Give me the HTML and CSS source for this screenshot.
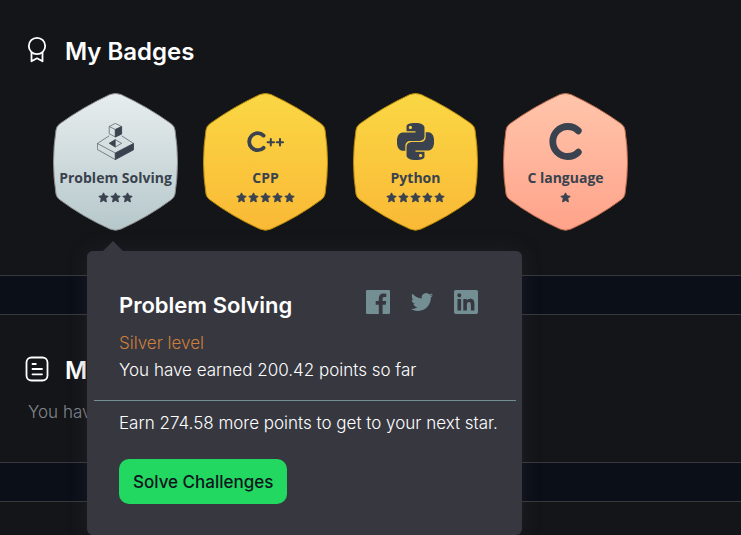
FILE: index.html
```html
<!DOCTYPE html>
<html lang="en">
<head>
<meta charset="utf-8">
<meta name="viewport" content="width=device-width, initial-scale=1">
<title>Profile</title>
<link rel="stylesheet" href="styles.css">
</head>
<body>
<svg class="defs" width="0" height="0" aria-hidden="true">
  <defs>
    <linearGradient id="silver" x1="0" y1="0" x2="0" y2="1"><stop offset="0" stop-color="#e7edee"/><stop offset="1" stop-color="#b6c8cb"/></linearGradient>
    <linearGradient id="gold" x1="0" y1="0" x2="0" y2="1"><stop offset="0" stop-color="#fad744"/><stop offset="1" stop-color="#fab936"/></linearGradient>
    <linearGradient id="bronze" x1="0" y1="0" x2="0" y2="1"><stop offset="0" stop-color="#ffc5ab"/><stop offset="1" stop-color="#ffa38a"/></linearGradient>
    <symbol id="hexagon" viewBox="0 0 127 138">
      <path d="M58 1.500Q63.500 -.5 69 1.500Q96 14 119.500 31Q122.500 33.500 123 37Q128 69 123 101Q122.500 104 119.500 106.500Q96 124 69 136Q63.500 138.500 58 136Q31 124 7.500 106.500Q4.500 104 4 101Q-1 69 4 37Q4.500 33.500 7.500 31Q31 14 58 1.500Z"/>
    </symbol>
    <symbol id="star" viewBox="0 0 10 10">
      <path d="M5 .8 6.300 3.500 9.200 3.900 7.100 6 7.600 9 5 7.600 2.400 9 2.900 6 .8 3.900 3.700 3.500Z" stroke="currentColor" stroke-width=".9" stroke-linejoin="round" fill="currentColor"/>
    </symbol>
  </defs>
</svg>
<main>
  <section class="panel panel-badges">
    <h2 class="panel-title">
      <svg class="title-icon" viewBox="0 0 24 28" fill="none" stroke="currentColor" stroke-width="1.800" stroke-linejoin="round" aria-hidden="true"><circle cx="12" cy="10" r="8.200"/><path d="M6.500 16.500V25.300L12 22.300 17.500 25.300V16.500"/></svg>
      My Badges
    </h2>
    <div class="badges">
      <button class="badge silver" type="button">
        <svg class="badge-shape" aria-hidden="true"><use href="#hexagon"/></svg>
        <span class="badge-body">
          <svg class="badge-icon" viewBox="0 0 37 37" fill="none" stroke="currentColor" stroke-width=".6" stroke-linejoin="round" aria-hidden="true">
            <path d="M18.300 .4 24.600 3.500V11L18.300 14 12.200 10.700V3.500ZM12.200 3.500 18.300 6.500 24.600 3.500M18.300 6.500V14"/>
            <path d="M18.300 6.500 24.600 3.500V11L18.300 14Z" fill="currentColor"/>
            <path d="M12.200 12.800 .4 20.500V26.500L18.300 36.600 36.600 26.700V20.500L24.600 12.800M.4 20.500 18.300 30 36.600 20.500M18.300 30V36.600"/>
            <path d="M18.300 30 36.600 20.500V26.700L18.300 36.600Z" fill="currentColor"/>
            <path d="M12.300 20.300 18.300 16.700 24.600 20.300 18.300 24Z"/>
            <path d="M12.300 20.300 18.300 16.700V24Z" fill="currentColor"/>
          </svg>
          <span class="badge-name">Problem Solving</span>
          <span class="stars"><svg><use href="#star"/></svg><svg><use href="#star"/></svg><svg><use href="#star"/></svg></span>
        </span>
      </button>
      <button class="badge gold" type="button">
        <svg class="badge-shape" aria-hidden="true"><use href="#hexagon"/></svg>
        <span class="badge-body">
          <svg class="badge-icon" viewBox="0 0 37 37" fill="none" stroke="currentColor" stroke-linecap="round" aria-hidden="true">
            <path d="M16.600 12.600A8.500 8.500 0 1 0 16.600 24.800" stroke-width="3.800"/>
            <path d="M20.600 19.300H27M23.800 16V22.600M29.800 19.300H36M33 16V22.600" stroke-width="2"/>
          </svg>
          <span class="badge-name">CPP</span>
          <span class="stars"><svg><use href="#star"/></svg><svg><use href="#star"/></svg><svg><use href="#star"/></svg><svg><use href="#star"/></svg><svg><use href="#star"/></svg></span>
        </span>
      </button>
      <button class="badge gold" type="button">
        <svg class="badge-shape" aria-hidden="true"><use href="#hexagon"/></svg>
        <span class="badge-body">
          <svg class="badge-icon" viewBox="0 0 24 24" fill="currentColor" aria-hidden="true">
            <path d="M14.25.18l.9.2.73.26.59.3.45.32.34.34.25.34.16.33.1.3.04.26.02.2-.01.13V8.5l-.05.63-.13.55-.21.46-.26.38-.3.31-.33.25-.35.19-.35.14-.33.1-.3.07-.26.04-.21.02H8.77l-.69.05-.59.14-.5.22-.41.27-.33.32-.27.35-.2.36-.15.37-.1.35-.07.32-.04.27-.02.21v3.06H3.17l-.21-.03-.28-.07-.32-.12-.35-.18-.36-.26-.36-.36-.35-.46-.32-.59-.28-.73-.21-.88-.14-1.05-.05-1.23.06-1.22.16-1.04.24-.87.32-.71.36-.57.4-.44.42-.33.42-.24.4-.16.36-.1.32-.05.24-.01h.16l.06.01h8.16v-.83H6.18l-.01-2.75-.02-.37.05-.34.11-.31.17-.28.25-.26.31-.23.38-.2.44-.18.51-.15.58-.12.64-.1.71-.06.77-.04.84-.02 1.27.05zm-6.3 1.98l-.23.33-.08.41.08.41.23.34.33.22.41.09.41-.09.33-.22.23-.34.08-.41-.08-.41-.23-.33-.33-.22-.41-.09-.41.09zm13.09 3.95l.28.06.32.12.35.18.36.27.36.35.35.47.32.59.28.73.21.88.14 1.04.05 1.23-.06 1.23-.16 1.04-.24.86-.32.71-.36.57-.4.45-.42.33-.42.24-.4.16-.36.09-.32.05-.24.02-.16-.01h-8.22v.82h5.84l.01 2.76.02.36-.05.34-.11.31-.17.29-.25.25-.31.24-.38.2-.44.17-.51.15-.58.13-.64.09-.71.07-.77.04-.84.01-1.27-.04-1.07-.14-.9-.2-.73-.25-.59-.3-.45-.33-.34-.34-.25-.34-.16-.33-.1-.3-.04-.25-.02-.2.01-.13v-5.34l.05-.64.13-.54.21-.46.26-.38.3-.32.33-.24.35-.2.35-.14.33-.1.3-.06.26-.04.21-.02.13-.01h5.84l.69-.05.59-.14.5-.21.41-.28.33-.32.27-.35.2-.36.15-.36.1-.35.07-.32.04-.28.02-.21V6.07h2.09l.14.01zm-6.47 14.25l-.23.33-.08.41.08.41.23.33.33.23.41.08.41-.08.33-.23.23-.33.08-.41-.08-.41-.23-.33-.33-.23-.41-.08-.41.08z"/>
          </svg>
          <span class="badge-name">Python</span>
          <span class="stars"><svg><use href="#star"/></svg><svg><use href="#star"/></svg><svg><use href="#star"/></svg><svg><use href="#star"/></svg><svg><use href="#star"/></svg></span>
        </span>
      </button>
      <button class="badge bronze" type="button">
        <svg class="badge-shape" aria-hidden="true"><use href="#hexagon"/></svg>
        <span class="badge-body">
          <svg class="badge-icon" viewBox="0 0 37 37" fill="none" stroke="currentColor" stroke-linecap="round" aria-hidden="true">
            <path d="M31.300 7.800A15 15 0 1 0 31.300 29.200" stroke-width="6.800"/>
          </svg>
          <span class="badge-name">C language</span>
          <span class="stars"><svg><use href="#star"/></svg></span>
        </span>
      </button>
      <div class="popover" role="dialog" aria-labelledby="popover-title">
        <div class="popover-head">
          <h3 class="popover-title" id="popover-title">Problem Solving</h3>
          <div class="share">
            <a href="#" aria-label="Facebook"><svg viewBox="0 0 24 24" fill="currentColor"><path d="M1.300 0H22.700Q24 0 24 1.300V22.700Q24 24 22.700 24H16.600V14.700H19.700L20.200 11.100H16.600V8.800C16.600 7.700 16.900 7 18.400 7H20.300V3.800Q19.500 3.600 17.500 3.600C14.700 3.600 12.800 5.300 12.800 8.400V11.100H9.700V14.700H12.800V24H1.300Q0 24 0 22.700V1.300Q0 0 1.300 0Z"/></svg></a>
            <a href="#" aria-label="Twitter"><svg viewBox="-1 -1 26 26" fill="currentColor"><path d="M23.953 4.57a10 10 0 01-2.825.775 4.958 4.958 0 002.163-2.723c-.951.555-2.005.959-3.127 1.184a4.92 4.92 0 00-8.384 4.482C7.69 8.095 4.067 6.13 1.64 3.162a4.822 4.822 0 00-.666 2.475c0 1.71.87 3.213 2.188 4.096a4.904 4.904 0 01-2.228-.616v.06a4.923 4.923 0 003.946 4.827 4.996 4.996 0 01-2.212.085 4.936 4.936 0 004.604 3.417 9.867 9.867 0 01-6.102 2.105c-.39 0-.779-.023-1.17-.067a13.995 13.995 0 007.557 2.209c9.053 0 13.998-7.496 13.998-13.985 0-.21 0-.42-.015-.63A9.935 9.935 0 0024 4.59z"/></svg></a>
            <a href="#" aria-label="LinkedIn"><svg viewBox="0 0 24 24" fill="currentColor" fill-rule="evenodd"><path d="M1.700 0H22.300Q24 0 24 1.700V22.300Q24 24 22.300 24H1.700Q0 24 0 22.300V1.700Q0 0 1.700 0ZM5.300 3.300a2.050 2.050 0 1 0 0 4.100a2.050 2.050 0 1 0 0-4.100ZM3.500 9V20.400H7.100V9ZM9.300 9V20.400H12.900V14.800C12.900 13.300 13.200 11.900 15 11.900S16.900 13.600 16.900 14.900V20.400H20.400V14.200C20.400 11.100 19.800 8.700 16.200 8.700 14.500 8.700 13.300 9.700 12.800 10.600V9Z"/></svg></a>
          </div>
        </div>
        <p class="level">Silver level</p>
        <p>You have earned 200.42 points so far</p>
        <hr>
        <p>Earn 274.58 more points to get to your next star.</p>
        <button class="solve" type="button">Solve Challenges</button>
      </div>
    </div>
  </section>
  <section class="panel panel-certs">
    <h2 class="panel-title">
      <svg class="title-icon" viewBox="0 0 24 28" fill="none" stroke="currentColor" stroke-width="1.800" stroke-linecap="round" aria-hidden="true"><rect x="1.500" y="2.500" width="21" height="23" rx="5"/><path d="M7.500 9H10.800M7.500 14H17M7.500 19.300H17"/></svg>
      My
    </h2>
    <p class="empty">You have</p>
  </section>
  <section class="panel panel-next"></section>
</main>
</body>
</html>
```
FILE: styles.css
```css
* {
  box-sizing: border-box;
}

body {
  margin: 0;
  background: #0b0f18;
  color: #fff;
  font-family: Inter, "Liberation Sans", sans-serif;
  font-size: 17px;
  font-weight: 300;
  line-height: 27px;
}

h2, h3, p {
  margin: 0;
}

.defs {
  position: absolute;
}

main {
  display: flex;
  flex-direction: column;
  gap: 38px;
  min-height: 100vh;
}

.panel {
  padding: 40px 25px 36px;
  background: #131519;
  border: solid #393a3f;
  border-width: 1px 0;
}

.panel-badges {
  padding-top: 36px;
  padding-bottom: 44px;
  border-top: 0;
}

.panel-next {
  flex: 1;
  padding: 0;
  border-bottom: 0;
}

.panel-title {
  display: flex;
  align-items: center;
  gap: 16px;
  font-size: 24px;
  font-weight: 600;
  line-height: 32px;
}

.title-icon {
  flex: none;
  width: 24px;
  height: 28px;
  margin-bottom: 4px;
}

.badges {
  position: relative;
  display: flex;
  flex-wrap: wrap;
  gap: 23px;
  margin: 25px 0 0 27px;
}

.badge {
  display: grid;
  width: 127px;
  padding: 0;
  border: 0;
  background: none;
  color: #39424e;
  cursor: pointer;
}

.badge-shape,
.badge-body {
  grid-area: 1 / 1;
}

.badge-shape {
  width: 127px;
  height: 138px;
  stroke-width: 1;
}

.silver .badge-shape {
  fill: url(#silver);
  stroke: #8c8d8f;
}

.gold .badge-shape {
  fill: url(#gold);
  stroke: #b88a08;
}

.bronze .badge-shape {
  fill: url(#bronze);
  stroke: #b9694a;
}

.badge-body {
  display: flex;
  flex-direction: column;
  align-items: center;
  padding-top: 30px;
}

.badge-icon {
  width: 37px;
  height: 37px;
}

.badge-name {
  margin-top: 8px;
  font: 700 14px/20px "Open Sans", "Noto Sans", sans-serif;
  white-space: nowrap;
}

.stars {
  display: flex;
  gap: 1px;
  margin-top: 4px;
}

.stars svg {
  width: 11px;
  height: 11px;
}

.popover {
  position: absolute;
  top: 158px;
  left: 35px;
  width: 435px;
  padding: 39px 32px 31px;
  border-radius: 6px;
  background: #373740;
  box-shadow: 0 0 20px rgba(55, 55, 64, .3);
}

.popover::before {
  content: "";
  position: absolute;
  top: -10px;
  left: 16px;
  border: solid transparent;
  border-width: 0 10px 10px;
  border-bottom-color: #373740;
}

.popover-head {
  display: flex;
  align-items: center;
  justify-content: space-between;
  margin-bottom: 10px;
}

.popover-title {
  font-size: 22px;
  font-weight: 600;
  line-height: 30px;
}

.share {
  display: flex;
  gap: 20px;
  margin: 0 12px 6px 0;
  color: #738f93;
}

.share a {
  color: inherit;
}

.share svg {
  display: block;
  width: 24px;
  height: 24px;
}

.popover p {
  white-space: nowrap;
}

.popover .level {
  color: #cd7f3b;
}

.popover hr {
  height: 1px;
  margin: 16px -26px 9px -25px;
  border: 0;
  background: #738f93;
}

.solve {
  height: 45px;
  margin-top: 22px;
  padding: 0 14px;
  border: 0;
  border-radius: 10px;
  background: #22d860;
  color: #0e141e;
  font: 500 17px/24px Inter, "Liberation Sans", sans-serif;
  cursor: pointer;
}

.empty {
  margin-top: 12px;
  padding-left: 3px;
  color: #85868c;
}
```
